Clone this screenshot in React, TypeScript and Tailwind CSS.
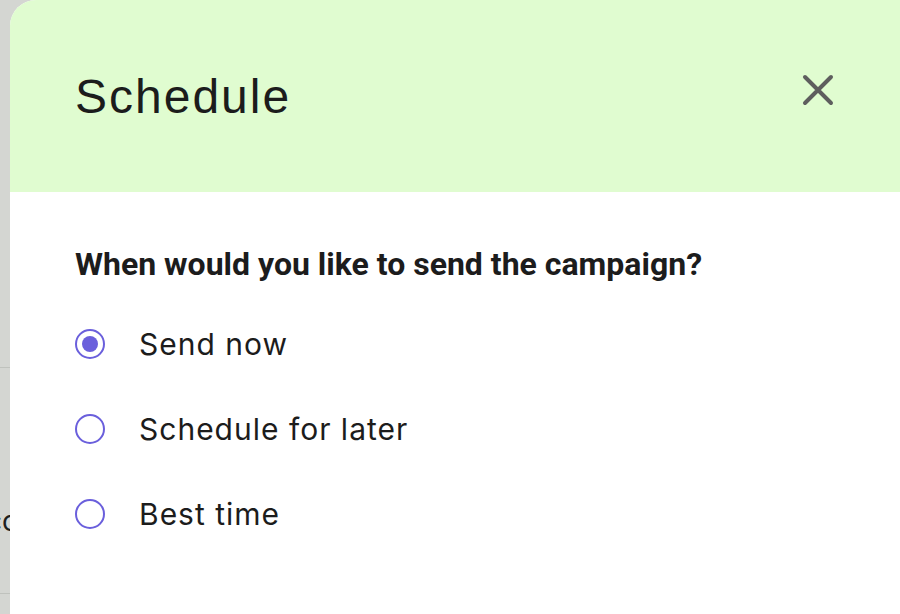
import React from "react";

const options = ["Send now", "Schedule for later", "Best time"];

export default function App() {
  return (
    <div className="w-[900px] h-[614px] overflow-hidden bg-[#d4d6d2] flex" style={{ fontFamily: "Inter, 'Liberation Sans', sans-serif" }}>
      <div className="w-[10px] shrink-0 relative overflow-hidden">
        <div className="absolute left-0 top-[367px] w-[10px] h-px bg-[#bfc2bd]" />
        <div className="absolute left-0 top-[593px] w-[10px] h-px bg-[#bfc2bd]" />
        <div className="absolute left-[-14px] top-[503px] text-[28px] leading-[36px] text-[#1e1e1e] whitespace-nowrap">cc</div>
      </div>
      <div className="flex-1 flex flex-col bg-white rounded-tl-[26px] overflow-hidden">
        <div className="h-[192px] shrink-0 bg-[#e0fcd0] flex items-start justify-between pl-[65px] pr-[64px] pt-[69px]">
          <h1 className="text-[48px] leading-[56px] text-[#1c1c1c]" style={{ fontFamily: "'Liberation Sans', Arial, sans-serif", letterSpacing: "2px" }}>Schedule</h1>
          <button className="mt-[3px] w-[36px] h-[36px] flex items-center justify-center">
            <svg width="36" height="36" viewBox="0 0 36 36" fill="none" stroke="#5e5e5e" strokeWidth="4" strokeLinecap="round">
              <path d="M5 5 L31 31 M31 5 L5 31" />
            </svg>
          </button>
        </div>
        <div className="pl-[65px] pt-[52px] flex flex-col">
          <p className="text-[32px] leading-[40px] font-bold text-[#1c1c1c]" style={{ fontFamily: "Roboto, 'Liberation Sans', sans-serif" }}>When would you like to send the campaign?</p>
          <div className="mt-[42px] flex flex-col gap-[49px]">
            {options.map((o, i) => (
              <label key={o} className="flex items-center gap-[34px] h-[36px]">
                <span className="w-[30px] h-[30px] rounded-full border-2 border-[#6a5fdc] flex items-center justify-center">
                  {i === 0 && <span className="w-[16px] h-[16px] rounded-full bg-[#6a5fdc]" />}
                </span>
                <span className="text-[30px] leading-[36px] text-[#1c1c1c]" style={{ letterSpacing: "1px" }}>{o}</span>
              </label>
            ))}
          </div>
        </div>
      </div>
    </div>
  );
}
